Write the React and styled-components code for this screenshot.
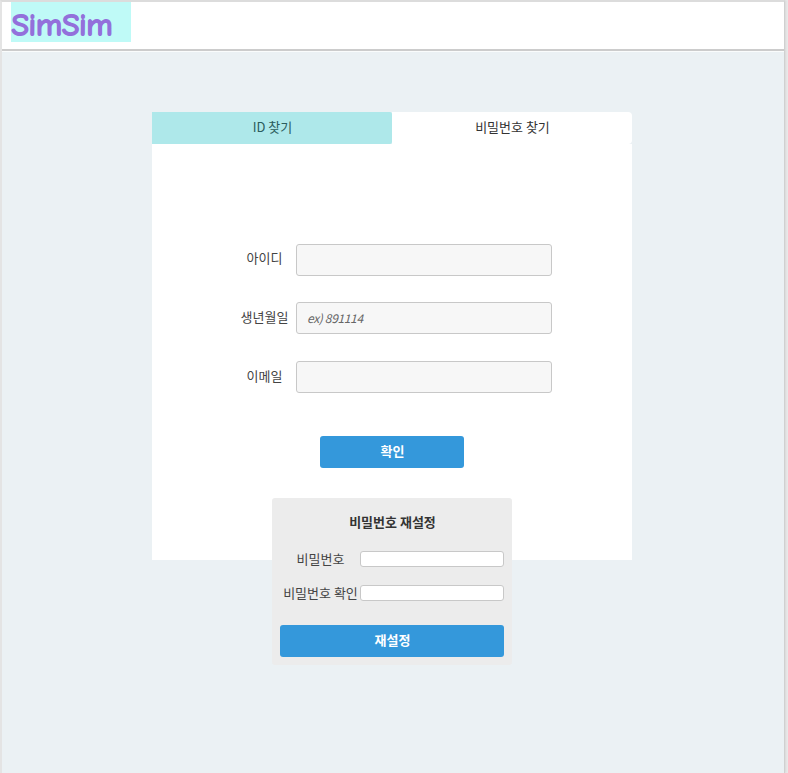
import React from "react";
import styled, { createGlobalStyle } from "styled-components";

const GlobalStyle = createGlobalStyle`
  * { box-sizing: border-box; }
  body {
    margin: 0;
    background: #e9e9e9;
    overflow: hidden;
    font-family: "Noto Sans CJK KR", "Noto Sans", sans-serif;
    font-size: 13px;
    color: #444;
  }
`;

const Page = styled.div`
  width: 785px;
  height: 773px;
  border: 1px solid #d0d0d0;
  border-width: 2px 1px 0 2px;
  border-top-color: #dcdcdc;
  border-left-color: #e4e4e4;
  background: #ebf1f4;
  box-shadow: 1px 0 2px #d8d8d8;
`;

const Header = styled.header`
  height: 49px;
  padding-left: 9px;
  background: #fff;
  border-bottom: 2px solid #ccc;
  box-shadow: 0 1px 0 #fafcfc;
`;

const Logo = styled.div`
  width: 120px;
  height: 40px;
  background: #bffaf7;

  svg { display: block; }
  text {
    font-family: "Comic Sans MS", "Comic Neue", Lato, sans-serif;
    font-size: 30px;
    fill: #9370db;
    stroke: #9370db;
    stroke-width: 1.9px;
    stroke-linejoin: round;
  }
`;

const Finder = styled.main`
  width: 480px;
  margin: 61px 0 0 150px;
`;

const Tabs = styled.nav`
  display: flex;
`;

const Tab = styled.button`
  width: 240px;
  height: 32px;
  padding: 0 0 3px 1px;
  border: 0;
  border-radius: ${(p) => (p.$muted ? "0 2px 2px 0" : "0 4px 4px 0")};
  background: ${(p) => (p.$muted ? "#aee8ea" : "#fff")};
  color: ${(p) => (p.$muted ? "#2b5c5c" : "#333")};
  font: inherit;
`;

const Panel = styled.section`
  height: 416px;
  padding-top: 100px;
  background: #fff;
`;

const Fields = styled.div`
  display: grid;
  row-gap: ${(p) => p.$gap};
`;

const Field = styled.label`
  display: grid;
  grid-template-columns: ${(p) => p.$columns};
  align-items: center;
  margin-left: ${(p) => p.$inset};
  margin-bottom: ${(p) => p.$below || "0"};
`;

const Caption = styled.span`
  margin-top: ${(p) => p.$lift || "-4px"};
  padding-left: 1px;
  line-height: 16px;
  text-align: center;
  white-space: nowrap;
`;

const Input = styled.input`
  width: 100%;
  height: ${(p) => (p.$small ? "16px" : "32px")};
  padding: 0 10px 1px;
  border: 1px solid #c8c8c8;
  border-radius: 3px;
  background: ${(p) => (p.$small ? "#fff" : "#f7f7f7")};
  font: italic 12px "Noto Sans CJK KR", "Noto Sans", sans-serif;
  letter-spacing: -0.35px;

  &::placeholder { color: #666; opacity: 1; }
`;

const Button = styled.button`
  display: block;
  width: ${(p) => p.$width};
  height: 32px;
  margin: ${(p) => p.$margin};
  padding: 0 0 3px 1px;
  border: 0;
  border-radius: 3px;
  background: #3498db;
  color: #fff;
  font: inherit;
  font-weight: 700;
`;

const ResetCard = styled.form`
  width: 240px;
  height: 167px;
  margin: 30px 0 0 120px;
  padding: 14px 8px 8px;
  border-radius: 3px;
  background: #ececec;
`;

const ResetTitle = styled.h2`
  margin: 0 0 19px;
  padding-left: 1px;
  color: #333;
  font-size: 13px;
  font-weight: 700;
  line-height: 20px;
  text-align: center;
`;

const fields = [
  { caption: "아이디" },
  { caption: "생년월일", placeholder: "ex) 891114", below: "1px", lift: "-2px" },
  { caption: "이메일", lift: "-2px" },
];

export default function App() {
  return (
    <Page>
      <GlobalStyle />
      <Header>
        <Logo>
          <svg width="120" height="40">
            <text x="0.5" y="33" textLength="101" lengthAdjust="spacingAndGlyphs">SimSim</text>
          </svg>
        </Logo>
      </Header>
      <Finder>
        <Tabs>
          <Tab $muted>ID 찾기</Tab>
          <Tab>비밀번호 찾기</Tab>
        </Tabs>
        <Panel>
          <Fields $gap="26px">
            {fields.map((f) => (
              <Field key={f.caption} $columns="64px 256px" $inset="80px" $below={f.below}>
                <Caption $lift={f.lift}>{f.caption}</Caption>
                <Input placeholder={f.placeholder} />
              </Field>
            ))}
          </Fields>
          <Button $width="144px" $margin="43px 0 0 168px">확인</Button>
          <ResetCard>
            <ResetTitle>비밀번호 재설정</ResetTitle>
            <Fields $gap="18px">
              <Field $columns="80px 144px" $inset="0">
                <Caption $lift="0">비밀번호</Caption>
                <Input $small type="password" />
              </Field>
              <Field $columns="80px 144px" $inset="0">
                <Caption $lift="0">비밀번호 확인</Caption>
                <Input $small type="password" />
              </Field>
            </Fields>
            <Button type="button" $width="224px" $margin="24px 0 0">재설정</Button>
          </ResetCard>
        </Panel>
      </Finder>
    </Page>
  );
}
